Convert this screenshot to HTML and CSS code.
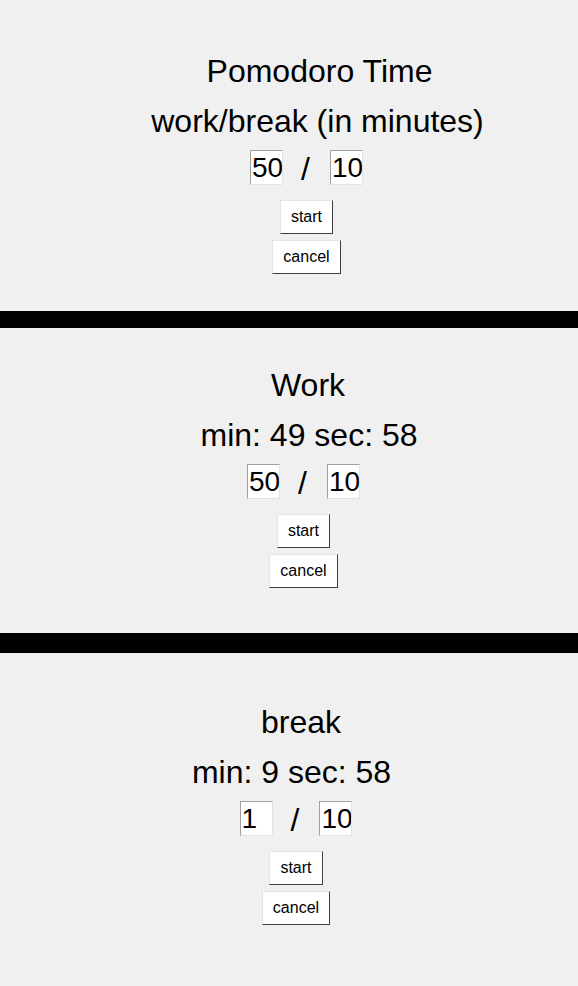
FILE: index.html
```html
<!DOCTYPE html>
<html lang="en">
<head>
<meta charset="utf-8">
<title>Pomodoro</title>
<link rel="stylesheet" href="styles.css">
</head>
<body>
<section class="panel panel-setup">
  <div class="line head">Pomodoro Time</div>
  <div class="line sub">work/break (in minutes)</div>
  <div class="controls">
    <div class="times"><input class="num" type="text" value="50"><span class="slash">/</span><input class="num" type="text" value="10"></div>
    <button class="btn btn-start">start</button>
    <button class="btn btn-cancel">cancel</button>
  </div>
</section>
<div class="bar bar-thin"></div>
<section class="panel panel-work">
  <div class="line head">Work</div>
  <div class="line sub">min: 49 sec: 58</div>
  <div class="controls">
    <div class="times"><input class="num" type="text" value="50"><span class="slash">/</span><input class="num" type="text" value="10"></div>
    <button class="btn btn-start">start</button>
    <button class="btn btn-cancel">cancel</button>
  </div>
</section>
<div class="bar bar-thick"></div>
<section class="panel panel-break">
  <div class="line head">break</div>
  <div class="line sub">min: 9 sec: 58</div>
  <div class="controls">
    <div class="times"><input class="num" type="text" value="1"><span class="slash">/</span><input class="num" type="text" value="10"></div>
    <button class="btn btn-start">start</button>
    <button class="btn btn-cancel">cancel</button>
  </div>
</section>
</body>
</html>
```
FILE: styles.css
```css
html, body {
  margin: 0;
  padding: 0;
  background: #f0f0f0;
}
body {
  font-family: "Liberation Sans", Arial, sans-serif;
  color: #000;
  height: 986px;
  overflow: hidden;
}
.panel {
  display: flex;
  flex-direction: column;
  align-items: center;
}
.line {
  font-size: 32px;
  line-height: 50px;
  white-space: nowrap;
}
.controls {
  display: flex;
  flex-direction: column;
  align-items: center;
  margin-top: 4px;
}
.times {
  display: flex;
  align-items: flex-start;
  height: 35px;
}
.num {
  box-sizing: border-box;
  width: 33px;
  height: 35px;
  margin: 0;
  padding: 0 0 0 1px;
  border: 1px solid;
  border-color: #a0a0a0 #e3e3e3 #e3e3e3 #a0a0a0;
  background: #fff;
  font-family: "Liberation Sans", Arial, sans-serif;
  font-size: 28px;
  color: #000;
  outline: none;
}
.slash {
  font-size: 32px;
  line-height: 31px;
  margin: 4px 20px 0 18px;
}
.btn {
  box-sizing: border-box;
  height: 34px;
  margin: 0;
  padding: 0 10px;
  border: 1px solid;
  border-color: #e3e3e3 #404040 #404040 #e3e3e3;
  background: #fff;
  font-family: "Liberation Sans", Arial, sans-serif;
  font-size: 16px;
  color: #000;
}
.btn-start {
  margin-top: 15px;
}
.btn-cancel {
  margin-top: 6px;
}
.bar {
  background: #000;
}
.bar-thin {
  height: 17px;
}
.bar-thick {
  height: 20px;
}

/* section-specific spacing & horizontal offsets */
.panel-setup {
  padding: 46px 0 37px;
}
.panel-setup .head { margin-left: 61px; }
.panel-setup .sub { margin-left: 57px; }
.panel-setup .controls { margin-left: 35px; }

.panel-work {
  padding: 32px 0 45px;
}
.panel-work .head { margin-left: 38px; }
.panel-work .sub { margin-left: 40px; }
.panel-work .controls { margin-left: 29px; }

.panel-break {
  padding: 44px 0 0;
}
.panel-break .head { margin-left: 24px; }
.panel-break .sub { margin-left: 5px; }
.panel-break .controls { margin-left: 14px; }
```
